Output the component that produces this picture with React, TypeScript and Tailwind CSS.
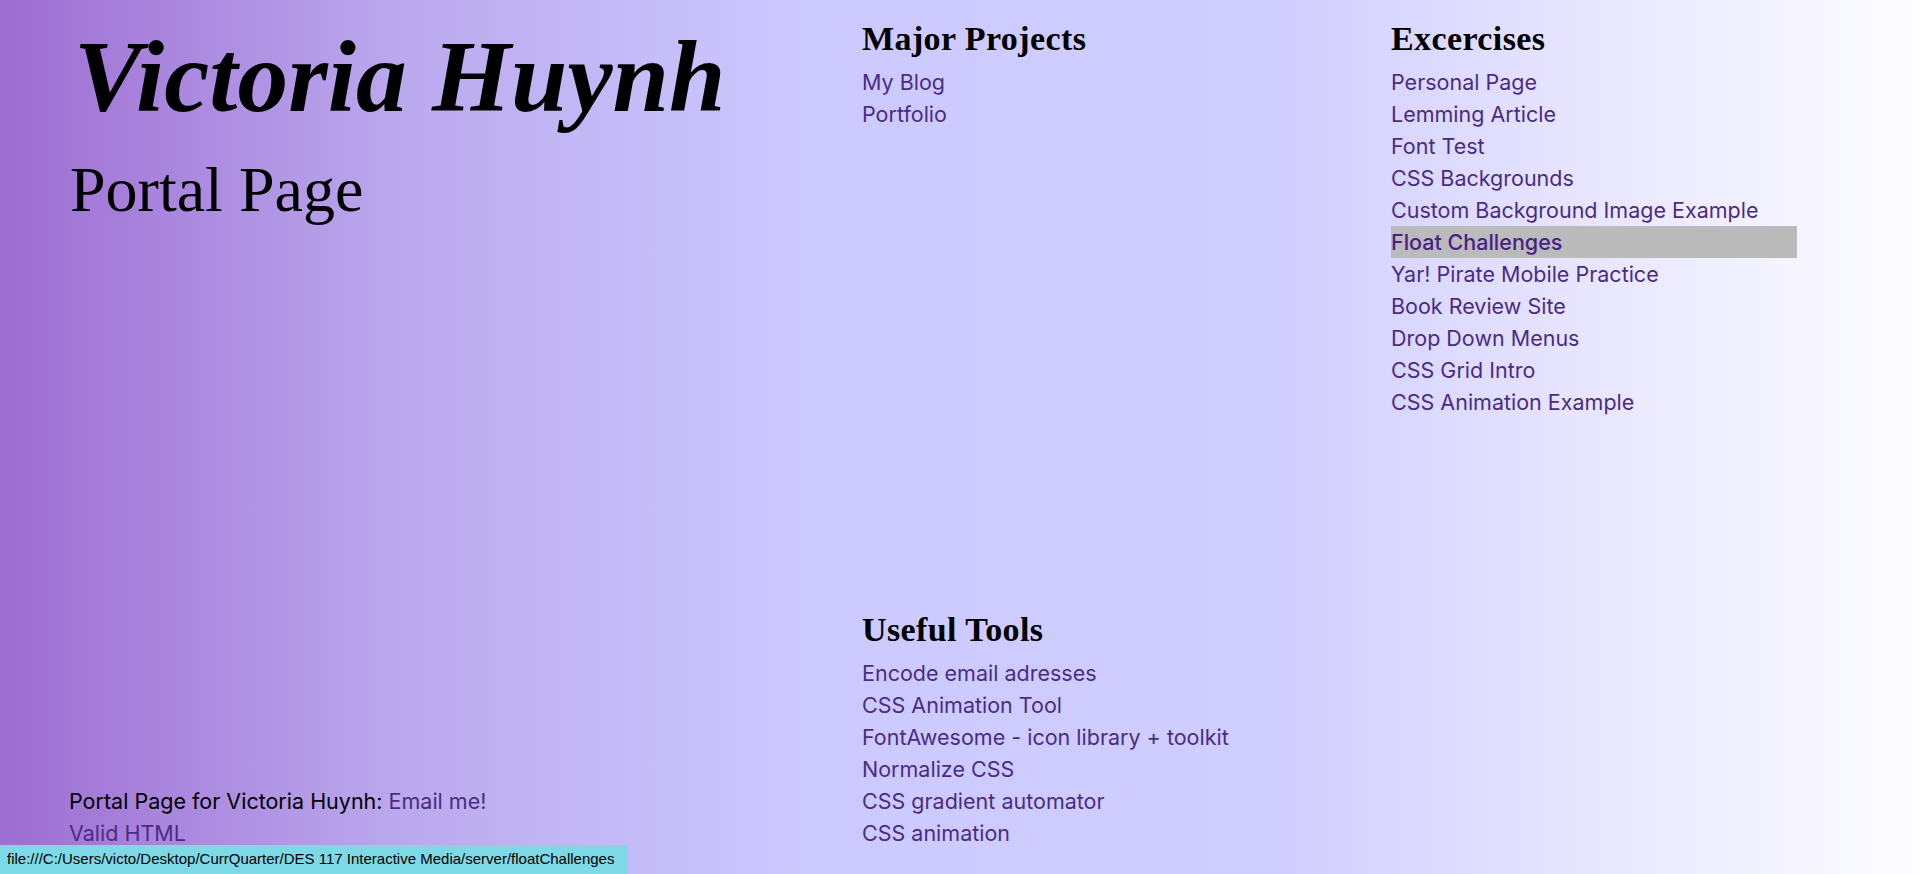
import React from "react";

const serif = "font-['Liberation_Serif',serif]";
const sans = "font-['Inter',sans-serif]";

const majorProjects = ["My Blog", "Portfolio"];

const exercises = [
  "Personal Page",
  "Lemming Article",
  "Font Test",
  "CSS Backgrounds",
  "Custom Background Image Example",
  "Float Challenges",
  "Yar! Pirate Mobile Practice",
  "Book Review Site",
  "Drop Down Menus",
  "CSS Grid Intro",
  "CSS Animation Example",
];

const tools = [
  "Encode email adresses",
  "CSS Animation Tool",
  "FontAwesome - icon library + toolkit",
  "Normalize CSS",
  "CSS gradient automator",
  "CSS animation",
];

const LinkList = ({ items, hovered }: { items: string[]; hovered?: string }) => (
  <ul className={`${sans} w-[406px] text-[21.5px] leading-[32px] text-[#4b2c84]`}>
    {items.map((item) => (
      <li
        key={item}
        className={item === hovered ? "bg-[#bbbbbb] font-medium text-[#4a1f88]" : ""}
      >
        <a href="#">{item}</a>
      </li>
    ))}
  </ul>
);

const Heading = ({ children }: { children: React.ReactNode }) => (
  <h2 className={`${serif} mb-[7px] text-[34px] font-bold leading-[40px] tracking-[0.4px] text-black`}>
    {children}
  </h2>
);

export default function App() {
  return (
    <div className="relative h-[874px] w-full overflow-hidden bg-[linear-gradient(to_right,#9d6dd2_0%,#bba9ee_21%,#ccc9ff_42%,#d0cdff_66%,#e8e6ff_83%,#fdfdff_100%)]">
      <div className="grid h-full grid-cols-[862px_529px_1fr] grid-rows-[1fr_auto] pb-[25px]">
        {/* Header */}
        <header className="pl-[70px] pt-[27px]">
          <h1 className={`${serif} pl-[4px] text-[101.5px] font-bold italic leading-none text-black`}>
            Victoria Huynh
          </h1>
          <p className={`${serif} mt-[29px] text-[64px] leading-none text-black`}>Portal Page</p>
        </header>

        {/* Major Projects */}
        <section className="pt-[19px]">
          <Heading>Major Projects</Heading>
          <LinkList items={majorProjects} />
        </section>

        {/* Excercises */}
        <section className="row-span-2 pt-[19px]">
          <Heading>Excercises</Heading>
          <LinkList items={exercises} hovered="Float Challenges" />
        </section>

        {/* Footer */}
        <footer className={`${sans} self-end pl-[69px] text-[21.5px] leading-[32px] text-black`}>
          <p>
            Portal Page for Victoria Huynh: <a href="#" className="text-[#4b2c84]">Email me!</a>
          </p>
          <a href="#" className="text-[#4b2c84]">Valid HTML</a>
        </footer>

        {/* Useful Tools */}
        <section className="self-end">
          <Heading>Useful Tools</Heading>
          <LinkList items={tools} />
        </section>
      </div>

      {/* Browser status bar */}
      <div className="absolute bottom-0 left-0 flex h-[29px] w-[628px] items-center rounded-tr-[3px] bg-[#7dd9e6] pl-[7px] font-['Liberation_Sans',sans-serif] text-[15px] text-black">
        file:///C:/Users/victo/Desktop/CurrQuarter/DES 117 Interactive Media/server/floatChallenges
      </div>
    </div>
  );
}
